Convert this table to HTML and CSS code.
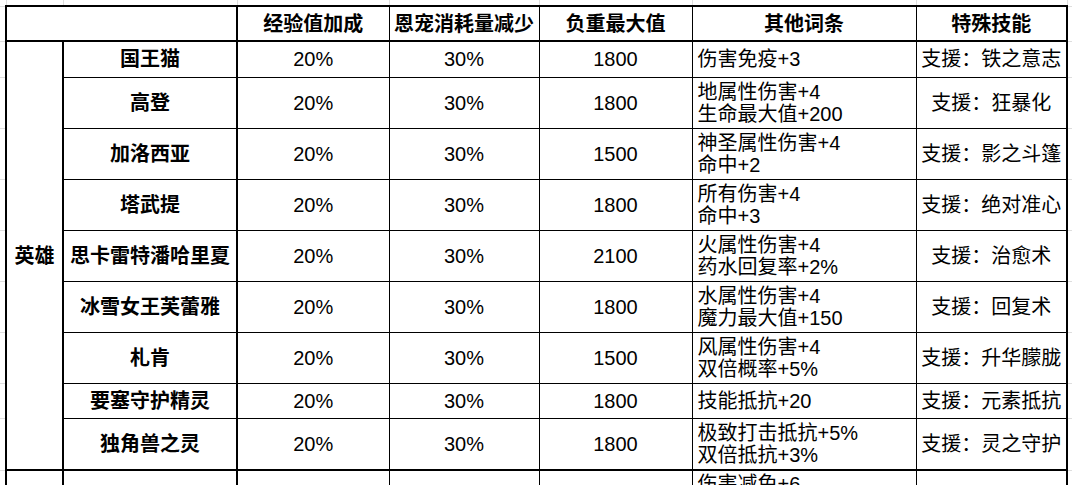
FILE: index.html
```html
<!DOCTYPE html>
<html lang="zh-CN">
<head>
<meta charset="utf-8">
<title>英雄</title>
<link rel="stylesheet" href="styles.css">
</head>
<body>
<table class="sheet">
  <colgroup>
    <col class="w-gl">
    <col class="w-cat">
    <col class="w-name">
    <col class="w-c3">
    <col class="w-c4">
    <col class="w-c5">
    <col class="w-c6">
    <col class="w-c7">
    <col class="w-gr">
  </colgroup>
  <tr class="ghost-row">
    <td class="ghost"></td><td class="ghost"></td><td class="ghost"></td><td class="ghost"></td><td class="ghost"></td><td class="ghost"></td><td class="ghost"></td><td class="ghost"></td><td class="ghost"></td>
  </tr>
  <tr class="head">
    <td class="ghost"></td>
    <th class="corner" colspan="2"></th>
    <th>经验值加成</th>
    <th>恩宠消耗量减少</th>
    <th>负重最大值</th>
    <th>其他词条</th>
    <th class="last">特殊技能</th>
    <td class="ghost"></td>
  </tr>
  <tr class="r-short">
    <td class="ghost"></td>
    <td class="cat" rowspan="9">英雄</td>
    <td class="name">国王猫</td>
    <td>20%</td><td>30%</td><td>1800</td>
    <td class="attr">伤害免疫+3</td>
    <td class="last">支援：铁之意志</td>
    <td class="ghost"></td>
  </tr>
  <tr class="r-tall">
    <td class="ghost"></td>
    <td class="name">高登</td>
    <td>20%</td><td>30%</td><td>1800</td>
    <td class="attr">地属性伤害+4<br>生命最大值+200</td>
    <td class="last">支援：狂暴化</td>
    <td class="ghost"></td>
  </tr>
  <tr class="r-tall">
    <td class="ghost"></td>
    <td class="name">加洛西亚</td>
    <td>20%</td><td>30%</td><td>1500</td>
    <td class="attr">神圣属性伤害+4<br>命中+2</td>
    <td class="last">支援：影之斗篷</td>
    <td class="ghost"></td>
  </tr>
  <tr class="r-tall">
    <td class="ghost"></td>
    <td class="name">塔武提</td>
    <td>20%</td><td>30%</td><td>1800</td>
    <td class="attr">所有伤害+4<br>命中+3</td>
    <td class="last">支援：绝对准心</td>
    <td class="ghost"></td>
  </tr>
  <tr class="r-tall">
    <td class="ghost"></td>
    <td class="name">思卡雷特潘哈里夏</td>
    <td>20%</td><td>30%</td><td>2100</td>
    <td class="attr">火属性伤害+4<br>药水回复率+2%</td>
    <td class="last">支援：治愈术</td>
    <td class="ghost"></td>
  </tr>
  <tr class="r-tall">
    <td class="ghost"></td>
    <td class="name">冰雪女王芙蕾雅</td>
    <td>20%</td><td>30%</td><td>1800</td>
    <td class="attr">水属性伤害+4<br>魔力最大值+150</td>
    <td class="last">支援：回复术</td>
    <td class="ghost"></td>
  </tr>
  <tr class="r-tall">
    <td class="ghost"></td>
    <td class="name">札肯</td>
    <td>20%</td><td>30%</td><td>1500</td>
    <td class="attr">风属性伤害+4<br>双倍概率+5%</td>
    <td class="last">支援：升华朦胧</td>
    <td class="ghost"></td>
  </tr>
  <tr class="r-mid">
    <td class="ghost"></td>
    <td class="name">要塞守护精灵</td>
    <td>20%</td><td>30%</td><td>1800</td>
    <td class="attr">技能抵抗+20</td>
    <td class="last">支援：元素抵抗</td>
    <td class="ghost"></td>
  </tr>
  <tr class="r-end">
    <td class="ghost"></td>
    <td class="name end">独角兽之灵</td>
    <td class="end">20%</td><td class="end">30%</td><td class="end">1800</td>
    <td class="attr end">极致打击抵抗+5%<br>双倍抵抗+3%</td>
    <td class="last end">支援：灵之守护</td>
    <td class="ghost"></td>
  </tr>
  <tr class="r-next">
    <td class="ghost"></td>
    <td class="cat">神兽</td>
    <td class="name">麒麟</td>
    <td></td><td></td><td></td>
    <td class="attr top">伤害减免+6<br>生命最大值+300</td>
    <td class="last">支援：神圣守护</td>
    <td class="ghost"></td>
  </tr>
</table>
</body>
</html>
```

FILE: styles.css
```css
html, body {
  margin: 0;
  padding: 0;
  background: #ffffff;
}

.sheet {
  border-collapse: collapse;
  table-layout: fixed;
  width: 1072px;
  font-family: "Liberation Sans", "Noto Sans CJK SC", sans-serif;
  font-size: 20px;
  line-height: 22px;
  color: #000000;
}

.w-gl { width: 6px; }
.w-cat { width: 57px; }
.w-name { width: 174px; }
.w-c3 { width: 152px; }
.w-c4 { width: 150px; }
.w-c5 { width: 153px; }
.w-c6 { width: 224px; }
.w-c7 { width: 151px; }
.w-gr { width: 5px; }

.sheet td,
.sheet th {
  border: 1px solid #000000;
  padding: 0;
  text-align: center;
  vertical-align: middle;
  white-space: nowrap;
  overflow: hidden;
}

.sheet th {
  font-weight: 700;
  border-top-width: 2px;
  border-bottom-width: 2px;
}

.sheet .ghost {
  border: none;
  border-right: 1px solid #dedede;
  border-bottom: 1px solid #dedede;
  padding: 0;
}

.ghost-row { height: 6px; }
.head { height: 35px; }
.r-short { height: 36px; }
.r-tall { height: 51px; }
.r-mid { height: 35px; }
.r-end { height: 52px; }
.r-next { height: 53px; }

.sheet .corner {
  border-left-width: 2px;
  border-right-width: 2px;
}

.sheet .cat {
  font-weight: 700;
  border-left-width: 2px;
  border-right-width: 2px;
  border-bottom-width: 2px;
}

.sheet .name {
  font-weight: 700;
  border-right-width: 2px;
}

.sheet .attr {
  text-align: left;
  padding-left: 5px;
}

.sheet .top {
  vertical-align: top;
  padding-top: 2px;
}

.sheet .last {
  border-right-width: 2px;
}

.sheet .end {
  border-bottom-width: 2px;
}
```
